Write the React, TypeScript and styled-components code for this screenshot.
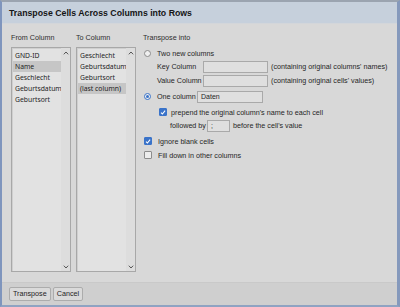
import React from 'react';
import styled, { createGlobalStyle } from 'styled-components';

const fromColumns = ['GND-ID', 'Name', 'Geschlecht', 'Geburtsdatum', 'Geburtsort'];
const toColumns = ['Geschlecht', 'Geburtsdatum', 'Geburtsort', '(last column)'];

const GlobalStyle = createGlobalStyle`
  html,
  body {
    margin: 0;
    background: #d8d8d8;
  }
`;

function Radio({ checked }: { checked?: boolean }): JSX.Element {
  return <RadioMark $checked={checked}>{checked && <RadioDot />}</RadioMark>;
}

function Check({ checked }: { checked?: boolean }): JSX.Element {
  return (
    <CheckMark $checked={checked}>
      {checked && (
        <svg width="7" height="7" viewBox="0 0 8 8">
          <path d="M1.3 4.2 L3.2 6 L6.8 1.6" fill="none" stroke="#fff" strokeWidth="1.4" />
        </svg>
      )}
    </CheckMark>
  );
}

function ListBox({ items, selected }: { items: string[]; selected: string }): JSX.Element {
  return (
    <List>
      <Items>
        {items.map((item) => (
          <Item key={item} $selected={item === selected}>
            {item}
          </Item>
        ))}
      </Items>
      <Track>
        <svg width="6" height="4" viewBox="0 0 6 4">
          <path d="M0.8 3.3 L3 1 L5.2 3.3" fill="none" stroke="#555" strokeWidth="1" />
        </svg>
        <svg width="6" height="4" viewBox="0 0 6 4">
          <path d="M0.8 0.7 L3 3 L5.2 0.7" fill="none" stroke="#555" strokeWidth="1" />
        </svg>
      </Track>
    </List>
  );
}

export default function App(): JSX.Element {
  return (
    <>
      <GlobalStyle />
      <Dialog>
        <Header>Transpose Cells Across Columns into Rows</Header>

        <Body>
          <Column $width={60}>
            <Label>From Column</Label>
            <ListBox items={fromColumns} selected="Name" />
          </Column>

          <Column $width={60}>
            <Label>To Column</Label>
            <ListBox items={toColumns} selected="(last column)" />
          </Column>

          <Options>
            <Label>Transpose into</Label>

            <Row $height={12} $top={0}>
              <Radio />
              <Text>Two new columns</Text>
            </Row>
            <Row $height={13} $top={1} $indent={13}>
              <FieldName $width={46}>Key Column</FieldName>
              <Input $width={65} />
              <Hint>(containing original columns' names)</Hint>
            </Row>
            <Row $height={13} $top={1} $indent={13}>
              <FieldName $width={46}>Value Column</FieldName>
              <Input $width={65} />
              <Hint>(containing original cells' values)</Hint>
            </Row>

            <Row $height={15} $top={2}>
              <Radio checked />
              <FieldName $width={40} $left={6}>One column</FieldName>
              <Input $width={66}>Daten</Input>
            </Row>
            <Row $height={12} $top={2} $indent={15}>
              <Check checked />
              <Text $left={4}>prepend the original column's name to each cell</Text>
            </Row>
            <Row $height={13} $top={1} $indent={26}>
              <FieldName $width={37}>followed by</FieldName>
              <Input $width={23}>;</Input>
              <Hint>before the cell's value</Hint>
            </Row>

            <Row $height={12} $top={3}>
              <Check checked />
              <Text>Ignore blank cells</Text>
            </Row>
            <Row $height={12} $top={2}>
              <Check />
              <Text>Fill down in other columns</Text>
            </Row>
          </Options>
        </Body>

        <Footer>
          <Button>Transpose</Button>
          <Button>Cancel</Button>
        </Footer>
      </Dialog>
    </>
  );
}

const Dialog = styled.div`
  width: 400px;
  height: 307px;
  box-sizing: border-box;
  display: flex;
  flex-direction: column;
  border-top: 2px solid #9ba4b0;
  border-left: 2px solid #7f95bd;
  border-right: 3px solid #8599bc;
  border-bottom: 2px solid #8fa3c2;
  background: #d8d8d8;
  font-family: 'Liberation Sans', Arial, sans-serif;
  color: #262626;
`;

const Header = styled.div`
  height: 21px;
  flex: none;
  display: flex;
  align-items: center;
  padding-left: 7px;
  background: #c6d0dc;
  border-bottom: 1px solid #d3d6da;
  font-size: 8.75px;
  font-weight: bold;
  color: #151515;
`;

const Body = styled.div`
  flex: 1;
  display: flex;
  padding: 9px 8px 10px 9px;
  min-height: 0;
`;

const Column = styled.div<{ $width: number }>`
  width: ${(p) => p.$width}px;
  margin-right: 5px;
  display: flex;
  flex-direction: column;
`;

const Label = styled.div`
  height: 10px;
  line-height: 10px;
  margin-bottom: 4px;
  font-size: 7.2px;
  color: #2e2e2e;
`;

const List = styled.div`
  flex: 1;
  display: flex;
  background: #e2e2e2;
  border: 1px solid #a8a8a8;
  box-shadow: inset 1px 1px 0 #cfcfcf;
`;

const Items = styled.div`
  flex: 1;
  padding: 2px 0 0 1px;
  min-width: 0;
`;

const Item = styled.div<{ $selected?: boolean }>`
  height: 11px;
  line-height: 11px;
  padding-left: 2px;
  white-space: nowrap;
  font-family: 'Noto Sans', 'Open Sans', sans-serif;
  font-size: 6.8px;
  color: #222;
  background: ${(p) => (p.$selected ? '#c6c6c6' : 'transparent')};
`;

const Track = styled.div`
  width: 9px;
  flex: none;
  display: flex;
  flex-direction: column;
  justify-content: space-between;
  align-items: center;
  background: #dddddd;
  padding: 3px 0 2px;
`;

const Options = styled.div`
  flex: 1;
  display: flex;
  flex-direction: column;
  padding-left: 2px;
`;

const Row = styled.div<{ $height: number; $top?: number; $indent?: number }>`
  height: ${(p) => p.$height}px;
  margin-top: ${(p) => p.$top ?? 0}px;
  padding-left: ${(p) => (p.$indent ?? 0) + 1}px;
  display: flex;
  align-items: center;
  font-size: 7.2px;
  white-space: nowrap;
`;

const RadioMark = styled.span<{ $checked?: boolean }>`
  width: 7px;
  height: 7px;
  box-sizing: border-box;
  border-radius: 50%;
  border: 1px solid ${(p) => (p.$checked ? '#3a73c9' : '#8c8c8c')};
  background: #efefef;
  display: flex;
  align-items: center;
  justify-content: center;
  flex: none;
`;

const RadioDot = styled.span`
  width: 3px;
  height: 3px;
  border-radius: 50%;
  background: #3a73c9;
`;

const CheckMark = styled.span<{ $checked?: boolean }>`
  width: 8px;
  height: 8px;
  box-sizing: border-box;
  border-radius: 1px;
  border: 1px solid ${(p) => (p.$checked ? '#3a73c9' : '#8c8c8c')};
  background: ${(p) => (p.$checked ? '#3a73c9' : '#ececec')};
  display: flex;
  align-items: center;
  justify-content: center;
  flex: none;
`;

const Text = styled.span<{ $left?: number }>`
  margin-left: ${(p) => p.$left ?? 6}px;
`;

const FieldName = styled.span<{ $width: number; $left?: number }>`
  width: ${(p) => p.$width}px;
  margin-left: ${(p) => p.$left ?? 0}px;
  flex: none;
`;

const Input = styled.span<{ $width: number }>`
  width: ${(p) => p.$width}px;
  height: 12px;
  box-sizing: border-box;
  border: 1px solid #a9a9a9;
  background: #dfdfdf;
  padding-left: 3px;
  line-height: 10px;
  font-size: 7px;
  flex: none;
`;

const Hint = styled.span`
  margin-left: 3px;
`;

const Footer = styled.div`
  height: 22px;
  flex: none;
  display: flex;
  align-items: center;
  gap: 2px;
  padding-left: 7px;
  background: #cfcfcf;
  border-top: 1px solid #c9c9c9;
`;

const Button = styled.button`
  height: 14px;
  padding: 0 3px;
  box-sizing: border-box;
  border: 1px solid #acacac;
  border-radius: 2px;
  background: #dadada;
  font-family: 'Liberation Sans', Arial, sans-serif;
  font-size: 7.2px;
  color: #1e1e1e;
  line-height: 12px;
`;
